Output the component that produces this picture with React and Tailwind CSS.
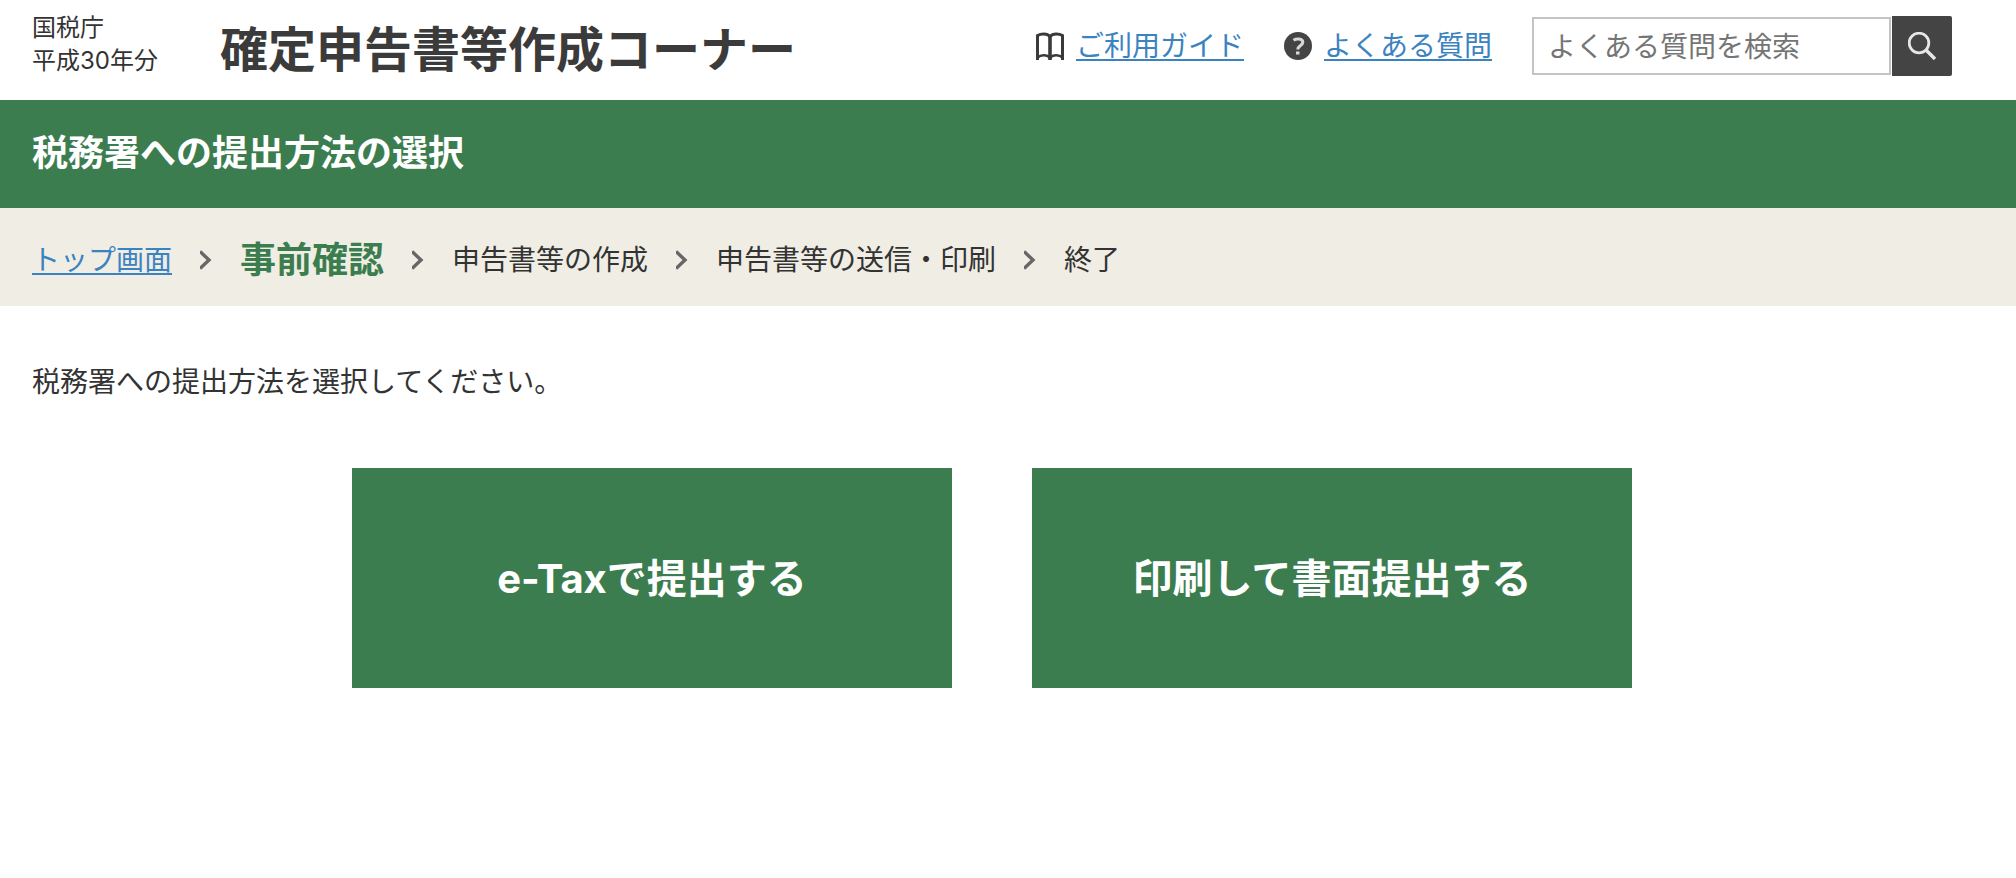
const GUIDE_LINK = 'text-[28px] leading-10 text-[#3b83c0] underline decoration-2 underline-offset-3'

const steps = [
  { label: 'トップ画面', href: '#top' },
  { label: '事前確認', current: true },
  { label: '申告書等の作成' },
  { label: '申告書等の送信・印刷' },
  { label: '終了' },
]

function BookIcon() {
  return (
    <svg className="size-7 shrink-0" viewBox="0 0 28 28" fill="none" stroke="#3a3a3a" strokeWidth="3" aria-hidden="true">
      <path d="M1.5 28V3.5C5 1.5 11 1 14 4.5C17 1 23 1.5 26.5 3.5V28" />
      <path d="M1.5 25.5C5 22.5 11 22.5 14 26C17 22.5 23 22.5 26.5 25.5" strokeWidth="2.6" />
      <path d="M14 4V28" strokeWidth="3.6" />
    </svg>
  )
}

function QuestionIcon() {
  return (
    <svg className="size-7 shrink-0" viewBox="0 0 28 28" fill="none" aria-hidden="true">
      <circle cx="14" cy="14" r="14" fill="#444" />
      <path d="M9.5 8.2C12 6.6 18.8 6 18.8 10.3C18.8 13.6 13.8 13.4 13.8 17.5" stroke="#d8d8d8" strokeWidth="3" />
      <path d="M12 19.5H15.5V22.5H12Z" fill="#d8d8d8" />
    </svg>
  )
}

function SearchIcon() {
  return (
    <svg className="size-7" viewBox="0 0 28 28" fill="none" stroke="#e6e6e6" aria-hidden="true">
      <circle cx="11" cy="11" r="9.8" strokeWidth="2.8" />
      <path d="M17.5 17.5L27 27" strokeWidth="3.4" />
    </svg>
  )
}

function Chevron() {
  return (
    <svg className="h-5 w-3 shrink-0" viewBox="0 0 12 20" fill="none" stroke="#666" strokeWidth="3.4" aria-hidden="true">
      <path d="M0 1.5L9 10L0 18.5" />
    </svg>
  )
}

function Header() {
  return (
    <header className="flex h-[100px] items-start justify-between pl-8 pr-16">
      <div className="flex">
        <p className="mr-[62px] pt-[11px] text-2xl leading-[33px]">
          国税庁
          <br />
          平成30年分
        </p>
        <h1 className="pt-5 text-5xl leading-[60px] font-bold whitespace-nowrap text-[#3b3b3b]">
          確定申告書等作成コーナー
        </h1>
      </div>
      <div className="flex items-start gap-10 pt-4">
        <div className="flex items-center gap-3 pt-2.5">
          <BookIcon />
          <a href="#guide" className={GUIDE_LINK}>ご利用ガイド</a>
        </div>
        <div className="flex items-center gap-3 pt-2.5">
          <QuestionIcon />
          <a href="#faq" className={GUIDE_LINK}>よくある質問</a>
        </div>
        <form className="flex items-center gap-px" onSubmit={(e) => e.preventDefault()}>
          <input
            type="text"
            aria-label="よくある質問を検索"
            placeholder="よくある質問を検索"
            className="h-[58px] w-[359px] border-2 border-[#c4c4c4] px-3.5 pt-0.5 text-[28px] placeholder:text-[#757575]"
          />
          <button type="submit" aria-label="検索" className="flex size-15 items-center justify-center rounded-r-xs bg-[#444]">
            <SearchIcon />
          </button>
        </form>
      </div>
    </header>
  )
}

function Steps() {
  return (
    <nav className="bg-[#f0ede4] px-8">
      <ol className="flex h-[98px] items-center gap-7 pt-1.5 text-[28px] leading-10">
        {steps.map((step, i) => (
          <li key={step.label} className="flex items-center gap-7 whitespace-nowrap">
            {i > 0 && <Chevron />}
            {step.href ? (
              <a href={step.href} className={GUIDE_LINK}>{step.label}</a>
            ) : step.current ? (
              <strong aria-current="step" className="text-4xl font-bold text-[#3c7d4f]">{step.label}</strong>
            ) : (
              <span>{step.label}</span>
            )}
          </li>
        ))}
      </ol>
    </nav>
  )
}

function MethodButton({ children }) {
  return (
    <button type="button" className="h-[220px] w-[600px] bg-[#3c7d4f] pt-0.5 text-[40px] font-bold text-white">
      {children}
    </button>
  )
}

export default function App() {
  return (
    <div className="min-h-screen bg-white font-['Inter','Noto_Sans_CJK_JP',sans-serif] text-[#333]">
      <Header />
      <h2 className="flex h-[108px] items-center bg-[#3c7d4f] px-8 pb-0.5 text-4xl font-bold text-white">
        税務署への提出方法の選択
      </h2>
      <Steps />
      <main className="pt-[54px] pr-16 pl-8">
        <p className="text-[28px] leading-[44px]">税務署への提出方法を選択してください。</p>
        <div className="mt-16 flex flex-wrap justify-center gap-20">
          <MethodButton>e-Taxで提出する</MethodButton>
          <MethodButton>印刷して書面提出する</MethodButton>
        </div>
      </main>
    </div>
  )
}
